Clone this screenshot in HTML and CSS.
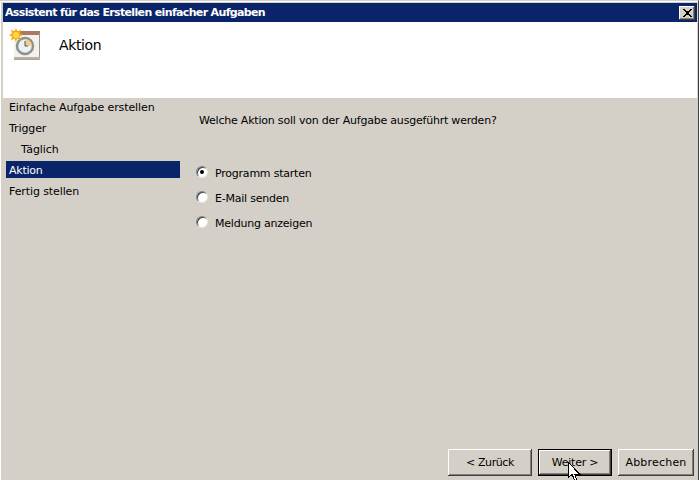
FILE: index.html
```html
<!DOCTYPE html>
<html lang="de">
<head>
<meta charset="utf-8">
<title>Assistent</title>
<link rel="stylesheet" href="styles.css">
</head>
<body>
<div class="window">
  <div class="titlebar">
    <span class="title-text">Assistent für das Erstellen einfacher Aufgaben</span>
    <span class="close-btn"><svg width="9" height="8" viewBox="0 0 9 8" shape-rendering="crispEdges"><path d="M0 0h2v1h1v1h3V1h1V0h2v1H8v1H7v1H6v2h1v1h1v1h1v1H7V7H6V6H3v1H2v1H0V7h1V6h1V5h1V3H2V2H1V1H0z" fill="#000"/></svg></span>
  </div>
  <div class="header">
    <svg class="header-icon" width="32" height="32" viewBox="0 0 32 32">
      <rect x="5" y="3" width="26" height="29" fill="#f5f1e8"/>
      <rect x="5" y="3" width="26" height="4" fill="#a87a62"/>
      <path d="M30.500 5v26.500H5" fill="none" stroke="#9a968e"/>
      <rect x="5" y="29" width="26" height="2.500" fill="#b5b1a8"/>
      <circle cx="16" cy="18" r="8" fill="#eef0f4" stroke="#8c8f96" stroke-width="2.500"/>
      <path d="M16 11a7 7 0 0 1 7 7h-7z" fill="#efd08c"/>
      <path d="M16 13v5h3" fill="none" stroke="#555" stroke-width="1"/>
      <path d="M7 0l1.500 3.500 3.500-2-1 4L14 7l-3.500 1.500 1 4-3.500-2L7 14l-1.500-3.500-3.500 2 1-4L0 7l3-1.500-1-4 3.500 2z" fill="#f7a912"/>
      <circle cx="7" cy="7" r="3" fill="#ffd94a"/>
    </svg>
    <span class="header-text">Aktion</span>
  </div>
  <div class="content">
    <ul class="steps">
      <li class="step">Einfache Aufgabe erstellen</li>
      <li class="step">Trigger</li>
      <li class="step step-sub">Täglich</li>
      <li class="step step-active">Aktion</li>
      <li class="step">Fertig stellen</li>
    </ul>
    <div class="main">
      <p class="question">Welche Aktion soll von der Aufgabe ausgeführt werden?</p>
      <div class="options">
        <div class="option"><span class="radio radio-on"></span>Programm starten</div>
        <div class="option"><span class="radio"></span>E-Mail senden</div>
        <div class="option"><span class="radio"></span>Meldung anzeigen</div>
      </div>
    </div>
  </div>
  <div class="footer">
    <span class="btn btn-back">&lt; Zurück</span>
    <span class="btn btn-default">Weiter &gt;</span>
    <span class="btn btn-cancel">Abbrechen</span>
  </div>
  <svg class="cursor" width="14" height="21" viewBox="0 0 14 21" shape-rendering="crispEdges"><path d="M.5.5v15l3.500-3.500 2.500 6h2.500l-2.500-6h5z" fill="#fff" stroke="#000"/></svg>
</div>
</body>
</html>
```
FILE: styles.css
```css
* { box-sizing: border-box; }
html, body { margin: 0; padding: 0; }
body {
  width: 699px;
  height: 480px;
  overflow: hidden;
  background: #d4d0c8;
  font-family: "DejaVu Sans", sans-serif;
  font-size: 11px;
  color: #000;
}
.window {
  position: relative;
  width: 699px;
  height: 480px;
  display: flex;
  flex-direction: column;
  padding: 3px 1px 0 3px;
  border-top: 1px solid #d4d0c8;
  border-right: 1px solid #404040;
  box-shadow: inset 1px 1px 0 #fff;
}
.titlebar {
  height: 19px;
  margin-top: -1px;
  background: #0a246a;
  color: #fff;
  font-weight: bold;
  display: flex;
  align-items: center;
  justify-content: space-between;
  padding: 0 2px;
  flex: none;
}
.title-text { letter-spacing: -0.65px; }
.close-btn {
  width: 16px;
  height: 14px;
  background: #d4d0c8;
  box-shadow: inset -1px -1px 0 #404040, inset 1px 1px 0 #fff, inset -2px -2px 0 #808080;
  display: flex;
  align-items: center;
  justify-content: center;
}
.header {
  height: 76px;
  background: #fff;
  flex: none;
  display: flex;
  align-items: flex-start;
  padding: 6px 0 0 6px;
}
.header-icon { flex: none; }
.header-text { font-size: 14px; letter-spacing: -0.4px; margin: 9px 0 0 18px; }
.content { flex: 1; display: flex; min-height: 0; }
.steps {
  list-style: none;
  margin: 0;
  padding: 0 0 0 3px;
  width: 177px;
  flex: none;
}
.step { height: 21px; line-height: 17px; padding: 1px 0 0 3px; white-space: nowrap; letter-spacing: -0.1px; }
.step-sub { padding-left: 15px; }
.step-active { height: 17px; margin-bottom: 4px; background: #0a246a; color: #fff; letter-spacing: -0.25px; }
.main { flex: 1; padding: 16px 0 0 19px; }
.question { margin: 0; line-height: 13px; letter-spacing: -0.21px; }
.options { margin-top: 34px; }
.option { display: flex; align-items: center; height: 25px; margin-left: -3px; letter-spacing: -0.22px; }
.radio {
  width: 12px;
  height: 12px;
  border-radius: 50%;
  background: #fff;
  border: 1px solid #808080;
  border-right-color: #e8e6e0;
  border-bottom-color: #e8e6e0;
  box-shadow: inset 1px 1px 0 #404040;
  margin: 0 7px 3px 0;
  position: relative;
  flex: none;
}
.radio-on::after {
  content: "";
  position: absolute;
  left: 3px;
  top: 3px;
  width: 4px;
  height: 4px;
  border-radius: 50%;
  background: #000;
}
.footer {
  flex: none;
  height: 33px;
  display: flex;
  justify-content: flex-end;
  padding: 2px 3px 0 0;
  gap: 6px;
}
.btn {
  height: 27px;
  display: flex;
  align-items: center;
  justify-content: center;
  background: #d4d0c8;
  box-shadow: inset -1px -1px 0 #404040, inset 1px 1px 0 #fff, inset -2px -2px 0 #808080;
}
.btn-back { width: 84px; letter-spacing: -0.4px; }
.btn-default { width: 74px; border: 1px solid #000; letter-spacing: -0.25px; }
.btn-cancel { width: 76px; letter-spacing: 0.2px; }
.cursor { position: absolute; left: 568px; top: 461px; }
```
